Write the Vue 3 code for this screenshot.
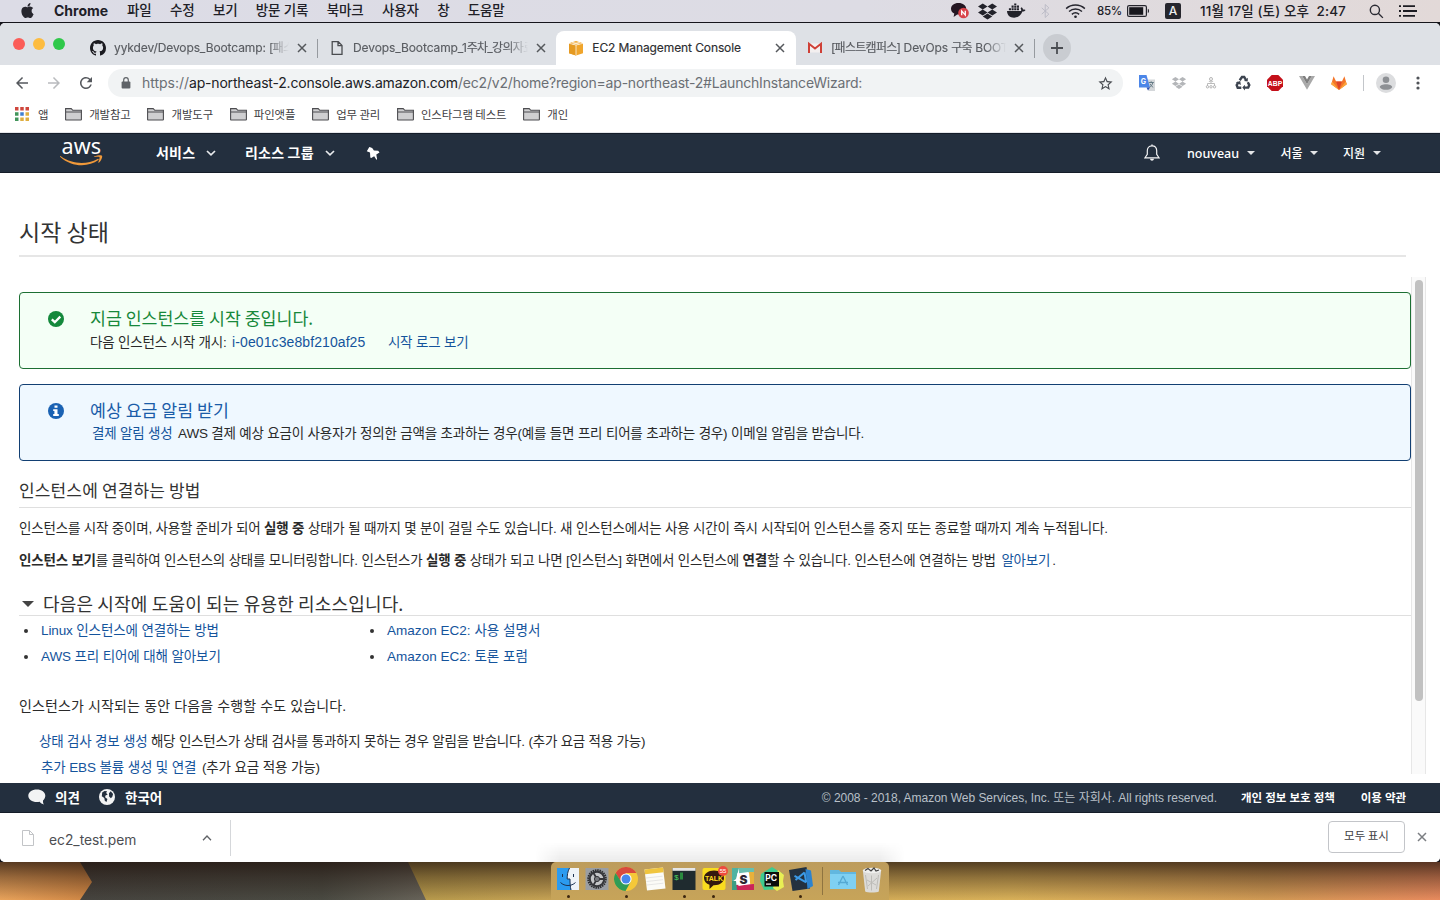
<script setup>
const menus = ['파일', '수정', '보기', '방문 기록', '북마크', '사용자', '창', '도움말']
const bookmarks = ['개발참고', '개발도구', '파인앳플', '업무 관리', '인스타그램 테스트', '개인']
</script>

<template>
  <div class="screen">
    <header class="menubar">
      <svg class="apple" viewBox="0 0 24 24"><path d="M12.152 6.896c-.948 0-2.415-1.078-3.96-1.04-2.04.027-3.91 1.183-4.961 3.014-2.117 3.675-.546 9.103 1.519 12.09 1.013 1.454 2.208 3.09 3.792 3.039 1.52-.065 2.09-.987 3.935-.987 1.831 0 2.35.987 3.96.948 1.637-.026 2.676-1.48 3.676-2.948 1.156-1.688 1.636-3.325 1.662-3.415-.039-.013-3.182-1.221-3.22-4.857-.026-3.04 2.48-4.494 2.597-4.559-1.429-2.09-3.623-2.324-4.39-2.376-2-.156-3.675 1.09-4.61 1.09zM15.53 3.83c.843-1.012 1.4-2.427 1.245-3.83-1.207.052-2.662.805-3.532 1.818-.78.896-1.454 2.338-1.273 3.714 1.338.104 2.715-.688 3.559-1.701" /></svg>
      <b class="app-name">Chrome</b>
      <span v-for="m in menus" :key="m" class="menu">{{ m }}</span>
      <div class="status">
        <svg class="s-chat" viewBox="0 0 20 18"><path d="M8.500 1C4 1 1 3.600 1 6.800c0 2.200 1.300 3.900 3.300 4.800L3.600 15l3.600-2.600c5.800.4 9-2.500 9-5.700C16.200 3.500 13 1 8.500 1z" fill="#241722" /><circle cx="13.500" cy="11" r="5.300" fill="#d8434a" /><path d="M11.700 13.200V8.900l3.600 4.200V8.800" fill="none" stroke="#fff" stroke-width="1.300" /></svg>
        <svg class="s-drop" viewBox="0 0 24 24"><path d="M6 1.807L0 5.629l6 3.822 6.001-3.822L6 1.807zM18 1.807l-6 3.822 6 3.822 6-3.822-6-3.822zM0 13.274l6 3.822 6.001-3.822L6 9.452l-6 3.822zM18 9.452l-6 3.822 6 3.822 6-3.822-6-3.822zM6 18.371l6.001 3.822 6-3.822-6-3.822L6 18.371z" /></svg>
        <svg class="s-dock" viewBox="0 0 20 16"><path d="M0 8h14.800c.3-1 .2-2-.5-3l1-.9c1 .7 1.400 1.500 1.500 2.300 1 0 2 0 2.700.5-.6 1.300-1.800 1.700-3.300 1.700C14.600 13 11.500 15 7.500 15 3 15 .2 12.500 0 8zM2 5h2.200v2.300H2zM4.800 5H7v2.300H4.800zM7.600 5h2.200v2.300H7.600zM10.400 5h2.200v2.300h-2.200zM4.800 2.300H7v2.200H4.800zM7.600 2.300h2.200v2.200H7.600zM10.400 2.300h2.200v2.200h-2.200zM7.600 0h2.200v1.800H7.600z" /></svg>
        <svg class="s-bt" viewBox="0 0 10 16"><path d="M.8 4.500l7.900 7-4 3.700V.8l4 3.700-7.900 7" /></svg>
        <svg class="s-wifi" viewBox="0 0 22 16"><path d="M1.200 5.500c5.500-5 14.100-5 19.600 0M4.200 8.600c3.900-3.500 9.700-3.500 13.600 0M7.200 11.500c2.200-1.900 5.400-1.900 7.600 0" /><circle cx="11" cy="14" r="1.400" /></svg>
        <span class="pct">85%</span>
        <svg class="s-bat" viewBox="0 0 23 12"><rect x=".6" y=".6" width="18.800" height="10.800" rx="1.500" fill="none" stroke="#25252d" stroke-width="1.200" /><rect x="2.200" y="2.200" width="14" height="7.600" fill="#17171d" /><path d="M20.800 3.800c1.600.4 1.600 4 0 4.400z" /></svg>
        <span class="s-a">A</span>
        <span class="clock">11월 17일 (토) 오후&nbsp; 2:47</span>
        <svg class="s-find" viewBox="0 0 16 16"><circle cx="6.300" cy="6.300" r="4.900" /><path d="M9.900 9.900l4.900 4.900" /></svg>
        <svg class="s-list" viewBox="0 0 18 12"><path d="M0 1.200h2M4 1.200h12M0 6h2M4 6h14M0 10.800h2M4 10.800h12" /></svg>
      </div>
    </header>

    <div class="window">
      <div class="tabs">
        <div class="lights"><i class="red"></i><i class="yellow"></i><i class="green"></i></div>
        <div class="tab">
          <svg class="fav" viewBox="0 0 16 16"><path fill="#1b1b20" d="M8 0C3.580 0 0 3.580 0 8c0 3.540 2.290 6.530 5.470 7.590.4.070.55-.17.55-.38 0-.19-.01-.82-.01-1.490-2.010.37-2.530-.49-2.690-.94-.09-.23-.48-.94-.82-1.130-.28-.15-.68-.52-.01-.53.63-.01 1.080.58 1.230.82.72 1.210 1.870.87 2.330.66.070-.52.28-.87.51-1.070-1.780-.2-3.640-.89-3.640-3.950 0-.87.31-1.590.82-2.150-.08-.2-.36-1.020.08-2.120 0 0 .67-.21 2.200.82.64-.18 1.320-.27 2-.27s1.360.09 2 .27c1.530-1.040 2.200-.82 2.200-.82.44 1.100.16 1.920.08 2.120.51.56.82 1.270.82 2.150 0 3.070-1.870 3.750-3.650 3.950.29.25.54.73.54 1.480 0 1.070-.01 1.930-.01 2.200 0 .21.15.46.55.38A8.010 8.010 0 0 0 16 8c0-4.420-3.580-8-8-8z" /></svg>
          <span class="label fade">yykdev/Devops_Bootcamp: <span class="kr">[패스트</span></span>
          <svg class="x" viewBox="0 0 10 10"><path d="M1 1l8 8M9 1l-8 8" /></svg>
        </div>
        <div class="tab divided">
          <svg class="fav" viewBox="0 0 16 16"><path d="M3.200 1.700h6.100l3.700 3.700v8.900H3.200zM9 1.700v4h4" fill="none" stroke="#4a4c50" stroke-width="1.300" /></svg>
          <span class="label fade">Devops_Bootcamp_1<span class="kr">주차_강의자료</span></span>
          <svg class="x" viewBox="0 0 10 10"><path d="M1 1l8 8M9 1l-8 8" /></svg>
        </div>
        <div class="tab active">
          <svg class="fav" viewBox="0 0 16 16"><path d="M1 3.200L8 1l7 2.200v10L8 15.500l-7-2.300z" fill="#f0a52c" /><path d="M1 3.200L8 5v10.500l-7-2.300z" fill="#e59a22" /><path d="M1 3.300L8 5l7-1.700M8 5v10.200M4 2.200l7.500 2M12 2.200L4.500 4.200" fill="none" stroke="#fff" stroke-width=".7" /></svg>
          <span class="label">EC2 Management Console</span>
          <svg class="x" viewBox="0 0 10 10"><path d="M1 1l8 8M9 1l-8 8" /></svg>
        </div>
        <div class="tab last">
          <svg class="fav" viewBox="0 0 16 16"><path d="M2 3.500h12v9H2z" fill="#f3efef" /><path d="M2 13V3.800l6 4.700 6-4.700V13" fill="none" stroke="#cf4037" stroke-width="2" /></svg>
          <span class="label fade"><span class="kr">[패스트캠퍼스]</span> DevOps <span class="kr">구축</span> BOOTCAMP</span>
          <svg class="x" viewBox="0 0 10 10"><path d="M1 1l8 8M9 1l-8 8" /></svg>
        </div>
        <span class="divider"></span>
        <div class="plus"><svg viewBox="0 0 12 12"><path d="M6 0v12M0 6h12" /></svg></div>
      </div>

      <div class="toolbar">
        <svg class="t" viewBox="0 0 24 24"><path d="M20 11H7.830l5.590-5.590L12 4l-8 8 8 8 1.410-1.410L7.830 13H20v-2z" /></svg>
        <svg class="t dim" viewBox="0 0 24 24"><path d="M12 4l-1.410 1.410L16.170 11H4v2h12.170l-5.580 5.590L12 20l8-8z" /></svg>
        <svg class="t" viewBox="0 0 24 24"><path d="M17.650 6.350A7.958 7.958 0 0012 4c-4.420 0-7.990 3.580-7.990 8s3.570 8 7.990 8c3.730 0 6.840-2.550 7.730-6h-2.080A5.990 5.990 0 0112 18c-3.310 0-6-2.690-6-6s2.690-6 6-6c1.660 0 3.140.69 4.220 1.780L13 11h7V4l-2.350 2.350z" /></svg>
        <div class="omni">
          <svg class="lock" viewBox="0 0 10 12"><path d="M1.500 4.500h7c.5 0 .9.4.9.9v5.200c0 .5-.4.900-.9.900h-7c-.5 0-.9-.4-.9-.9V5.400c0-.5.4-.9.9-.9z" /><path d="M2.700 5V3a2.300 2.300 0 0 1 4.600 0v2" fill="none" stroke="#5f6368" stroke-width="1.200" /></svg>
          <span class="url"><span class="scheme">https://</span><span class="host">ap-northeast-2.console.aws.amazon.com</span><span class="path">/ec2/v2/home?region=ap-northeast-2#LaunchInstanceWizard:</span></span>
          <svg class="star" viewBox="0 0 24 24"><path d="M22 9.240l-7.190-.62L12 2 9.190 8.630 2 9.240l5.460 4.730L5.820 21 12 17.270 18.180 21l-1.630-7.030L22 9.240zM12 15.400l-3.760 2.270 1-4.280-3.320-2.880 4.380-.38L12 6.100l1.710 4.040 4.380.38-3.320 2.880 1 4.280L12 15.400z" /></svg>
        </div>
        <div class="exts">
          <svg viewBox="0 0 16 16"><path d="M6.500 4.500H16V16H9.500z" fill="#d4d7da" /><path d="M0 0h7.500L11 12.500H0z" fill="#4c86e8" /><path d="M7.500 12.500H11L9 15.500z" fill="#2a4fb8" /><text x="1.700" y="8.600" class="g-letter">G</text><path d="M9.800 7.500h5M12.200 6.300v1.200M13.800 7.500c-.4 2.400-1.700 3.800-3.200 4.900M11 8.800c.6 1.600 1.800 2.800 3.200 3.500" fill="none" stroke="#5c7480" stroke-width=".9" /></svg>
          <svg class="gray" viewBox="-1.500 -1.500 27 27"><path d="M6 1.807L0 5.629l6 3.822 6.001-3.822L6 1.807zM18 1.807l-6 3.822 6 3.822 6-3.822-6-3.822zM0 13.274l6 3.822 6.001-3.822L6 9.452l-6 3.822zM18 9.452l-6 3.822 6 3.822 6-3.822-6-3.822zM6 18.371l6.001 3.822 6-3.822-6-3.822L6 18.371z" /></svg>
          <svg viewBox="0 0 16 16"><path d="M8 6v2.500M4.500 11V8.500h7V11M6 7c0-1.500 4-1.500 4 0" fill="none" stroke="#bbb" /><g fill="none" stroke="#b5b5b5"><circle cx="8" cy="4" r="1.500" /><circle cx="4.500" cy="11.800" r="1.200" /><circle cx="8" cy="11.800" r="1.200" /><circle cx="11.500" cy="11.800" r="1.200" /></g></svg>
          <svg viewBox="0 0 16 16"><g fill="none" stroke="#3d4450" stroke-width="2.400"><path d="M4.700 5.200L7 2h2.200l1.700 2.900M12.800 7.200l1.500 2.900-1.100 2.500H9.300M6.300 12.700H2.700L1.700 10.200l1.700-3" /></g><path d="M9 6l3.700.4L12.900 2.700zM9.900 9.700L7.300 12.600l2.700 2.800zM.8 7.600l4.400-1.700L5.900 10z" fill="#3d4450" /></svg>
          <svg viewBox="0 0 16 16"><path d="M4.700 0h6.600L16 4.700v6.600L11.300 16H4.700L0 11.300V4.700z" fill="#c4101a" /><text x="8" y="10.600" class="abp">ABP</text></svg>
          <svg viewBox="0 0 16 16"><path d="M0 1h3.200L8 9.300 12.800 1H16L8 14.800z" fill="#a9a9a9" /><path d="M3.200 1H6l2 3.500L10 1h2.800L8 9.300z" fill="#7f7f7f" /></svg>
          <svg viewBox="0 0 16 16"><path d="M8 15L.2 9.200 2.600 1.200l2.500 5.300h5.800l2.500-5.300 2.400 8z" fill="#f4762a" /><path d="M8 15L5.100 6.500h5.800z" fill="#dd4429" /><path d="M8 15L.2 9.200l1-2.700z M8 15l7.800-5.800-1-2.700z" fill="#fba63b" /></svg>
        </div>
        <span class="tsep"></span>
        <svg class="avatar" viewBox="0 0 20 20"><circle cx="10" cy="10" r="10" fill="#dcdddf" /><circle cx="10" cy="6.700" r="3.300" fill="#8d9094" /><path d="M3.800 14.200c0-4 12.400-4 12.400 0-1.600 3.400-10.800 3.400-12.400 0z" fill="#8d9094" /></svg>
        <svg class="kebab" viewBox="0 0 4 14"><circle cx="2" cy="2" r="1.600" /><circle cx="2" cy="7" r="1.600" /><circle cx="2" cy="12" r="1.600" /></svg>
      </div>

      <div class="bookmarks">
        <svg class="apps" viewBox="0 0 14 14"><path fill="#cf463d" d="M0 0h3.500v3.500H0zM5.250 0h3.500v3.500h-3.500zM10.500 0H14v3.500h-3.500z" /><path fill="#42955b" d="M0 5.250h3.500v3.500H0zM0 10.500h3.500V14H0z" /><path fill="#3f7fd2" d="M5.250 5.250h3.500v3.500h-3.500z" /><path fill="#dfae3f" d="M10.500 5.250H14v3.500h-3.500zM10.500 10.500H14V14h-3.500zM5.250 10.500h3.500V14h-3.500z" /></svg>
        <span class="apps-label">앱</span>
        <div v-for="b in bookmarks" :key="b" class="bm">
          <svg viewBox="0 0 17 14"><path d="M.6 12.400V1.600h5.600l1.600 1.700h8.600v9.100c0 .4-.2.600-.6.600H1.200c-.4 0-.6-.2-.6-.6z" fill="#cfcfd1" stroke="#4c4c50" stroke-width="1.100" /><path d="M1 5h15.200" stroke="#4c4c50" stroke-width="1" /></svg>
          <span>{{ b }}</span>
        </div>
      </div>

      <nav class="aws-nav">
        <svg class="logo" viewBox="0 0 44 28"><text x="1.500" y="14.500" textLength="39.500" lengthAdjust="spacingAndGlyphs">aws</text><path d="M.8 17.200c12 8.600 26.500 8.300 36.800 2.700.9-.4 1.500.6.8 1.200C28.500 28.600 11.500 28.300.3 18c-.5-.5-.1-1.100.5-.8z" fill="#f0993a" /><path d="M34.200 17.500c3.500-1.700 7.500-1.600 7.900-.8.4.9-.6 4.800-3 6.800-.6.4-1 .2-.7-.5.700-1.700 1.500-4.300 1.100-4.900-.5-.6-3.300-.2-4.900 0-.6 0-.8-.300-.4-.6z" fill="#f0993a" /></svg>
        <b class="services">서비스</b>
        <svg class="chev" viewBox="0 0 10 6"><path d="M1 1l4 3.800L9 1" /></svg>
        <b class="groups">리소스 그룹</b>
        <svg class="chev" viewBox="0 0 10 6"><path d="M1 1l4 3.800L9 1" /></svg>
        <svg class="pin" viewBox="0 0 14 14"><path d="M.8 5.200L3.300.9l1.700.5 1.400.9 1.500 2.200L12.200 4.700l1.300 1.800-3.200 2.100.8 4.700-.7.400L8.200 10.300l-3 1.800-.9-.5-.3-5z" /></svg>
        <div class="nav-right">
          <svg class="bell" viewBox="0 0 16 18"><path d="M8 1.800c-3.200 0-4.700 2.300-4.700 5v3.400L1 13.800h14l-2.300-3.600V6.800c0-2.700-1.500-5-4.700-5z" fill="none" stroke="#f3f4f5" stroke-width="1.200" /><path d="M6 14.800h4c-.2 2.600-3.800 2.600-4 0zM7.300.4h1.400v1.400H7.300z" /></svg>
          <span class="user">nouveau</span><i class="caret"></i>
          <span class="kr-nav seoul">서울</span><i class="caret"></i>
          <span class="kr-nav help">지원</span><i class="caret"></i>
        </div>
      </nav>

      <main class="page">
        <h1>시작 상태</h1>
        <div class="scroller">
          <div class="content">
            <section class="alert ok">
              <svg viewBox="0 0 16 16"><circle cx="8" cy="8" r="8" fill="#14893c" /><path d="M3.800 8.300l3 2.900 5.500-5.600" fill="none" stroke="#fff" stroke-width="2.300" /></svg>
              <div>
                <h2>지금 인스턴스를 시작 중입니다.</h2>
                <p>다음 인스턴스 시작 개시: <a class="iid">i-0e01c3e8bf210af25</a><a class="log">시작 로그 보기</a></p>
              </div>
            </section>
            <section class="alert info">
              <svg viewBox="0 0 16 16"><circle cx="8" cy="8" r="8" fill="#1a62b3" /><path d="M6.500 2.500h3v2.300h-3zM5.200 6.200h4.300v4.900h1.300v1.900H5.200v-1.900h1.200V8H5.200z" fill="#fff" /></svg>
              <div>
                <h2>예상 요금 알림 받기</h2>
                <p><a class="pad">결제 알림 생성</a> AWS 결제 예상 요금이 사용자가 정의한 금액을 초과하는 경우(예를 들면 프리 티어를 초과하는 경우) 이메일 알림을 받습니다.</p>
              </div>
            </section>
            <h3>인스턴스에 연결하는 방법</h3>
            <p class="para">인스턴스를 시작 중이며, 사용할 준비가 되어 <b>실행 중</b> 상태가 될 때까지 몇 분이 걸릴 수도 있습니다. 새 인스턴스에서는 사용 시간이 즉시 시작되어 인스턴스를 중지 또는 종료할 때까지 계속 누적됩니다.</p>
            <p class="para monitor"><b>인스턴스 보기</b>를 클릭하여 인스턴스의 상태를 모니터링합니다. 인스턴스가 <b>실행 중</b> 상태가 되고 나면 [인스턴스] 화면에서 인스턴스에 <b>연결</b>할 수 있습니다. 인스턴스에 연결하는 방법 <a class="pad">알아보기</a>.</p>
            <h4><i></i><span>다음은 시작에 도움이 되는 유용한 리소스입니다.</span></h4>
            <div class="links">
              <a>Linux 인스턴스에 연결하는 방법</a><a class="wide">Amazon EC2: 사용 설명서</a>
              <a>AWS 프리 티어에 대해 알아보기</a><a class="wide">Amazon EC2: 토론 포럼</a>
            </div>
            <p class="also">인스턴스가 시작되는 동안 다음을 수행할 수도 있습니다.</p>
            <p class="todo"><a>상태 검사 경보 생성</a> 해당 인스턴스가 상태 검사를 통과하지 못하는 경우 알림을 받습니다. (추가 요금 적용 가능)</p>
            <p class="todo ebs"><a class="pad">추가 EBS 볼륨 생성 및 연결</a> (추가 요금 적용 가능)</p>
          </div>
          <div class="bar"><i></i></div>
        </div>
      </main>

      <footer class="aws-foot">
        <svg class="bubble" viewBox="0 0 18 16"><path d="M8.800.4C4 .4.300 3 .3 6.800c0 3.700 3.700 6.300 8.500 6.300 1 0 2-.1 2.900-.4.9 1.200 2.400 2.500 4.300 2.700-.8-1-1.200-2.500-1-4 1.500-1.200 2.300-2.800 2.300-4.600C17.300 3 13.600.4 8.800.4z" /></svg>
        <b class="opinion">의견</b>
        <svg class="globe" viewBox="0 0 16 16"><circle cx="8" cy="8" r="8" fill="#f2f3f4" /><path d="M3.200 3.500l2.300-1.600 2.600.3-1 1.700 1.600 1.600-2.200 1.100-.4 1.700 2.300 1.700-.9 3.100-1.700-1.400-.5-2.600-2.500-1.900zM10 4.300l1.700-2 2.400 2.800-.8 2.700-1.400 1.500-1.800-1.700z" fill="#232f3e" /></svg>
        <b>한국어</b>
        <span class="copy">© 2008 - 2018, Amazon Web Services, Inc. 또는 자회사. All rights reserved.</span>
        <b class="legal privacy">개인 정보 보호 정책</b>
        <b class="legal">이용 약관</b>
      </footer>

      <div class="downloads">
        <svg class="file" viewBox="0 0 12 16"><path d="M.5.500h7l4 4v11H.5zM7.500.5v4h4" /></svg>
        <span class="fname">ec2_test.pem</span>
        <svg class="up" viewBox="0 0 10 6"><path d="M1 5.200L5 1l4 4.200" /></svg>
        <span class="dsep"></span>
        <button class="all">모두 표시</button>
        <svg class="x dx" viewBox="0 0 10 10"><path d="M1 1l8 8M9 1l-8 8" /></svg>
      </div>
    </div>

    <div class="desktop">
      <svg class="wall" viewBox="0 0 1440 38" preserveAspectRatio="none">
        <defs>
          <linearGradient id="w1" x1="0" x2="1"><stop offset="0" stop-color="#e9a35b" /><stop offset=".065" stop-color="#cf8644" /><stop offset=".29" stop-color="#b79a4c" /><stop offset=".4" stop-color="#c9a456" /><stop offset=".7" stop-color="#d9b159" /><stop offset=".88" stop-color="#d19a55" /><stop offset="1" stop-color="#e98b5e" /></linearGradient>
          <linearGradient id="w2" x1="0" x2="1"><stop offset="0" stop-color="#46443f" /><stop offset=".7" stop-color="#4a4a42" /><stop offset="1" stop-color="#68645a" /></linearGradient>
          <linearGradient id="w3" x1="0" x2="0" y1="0" y2="1"><stop offset="0" stop-color="#20120c" stop-opacity=".72" /><stop offset=".4" stop-color="#20120c" stop-opacity=".4" /><stop offset="1" stop-color="#20120c" stop-opacity="0" /></linearGradient>
        </defs>
        <path d="M0 0h1440v38H0z" fill="url(#w1)" />
        <path d="M80 0h328l18 38H80l12-18z" fill="url(#w2)" />
        <path d="M0 0h1440v38H0z" fill="url(#w3)" />
      </svg>
      <div class="dock">
        <div class="slot run"><svg viewBox="0 0 24 24"><path d="M1 1h22v22H1z" fill="#eef3f8" /><path d="M1 1h12.500c-2 4-2.300 7-2.300 11H14c0 4 .2 8 1 11H1z" fill="#2b9bf0" /><path d="M6.500 7v3M17.500 7v3M4.500 15.500c4 4 11 4 15 0M13.500 1c-2 4-2.300 7-2.300 11H14c0 4 .2 8 1 11" fill="none" stroke="#1c3252" stroke-width="1" /></svg></div>
        <div class="slot"><svg viewBox="0 0 24 24"><path d="M.500 1h23v22H.5z" fill="#9a9ea3" /><circle cx="12" cy="12" r="8.800" fill="none" stroke="#2c2d30" stroke-width="2" stroke-dasharray="1.500 .8" /><circle cx="12" cy="12" r="7.200" fill="#c4c6c8" stroke="#35363a" stroke-width="2" /><path d="M12 12h7M12 12L8.500 6M12 12l-3.500 6" stroke="#35363a" stroke-width="1.800" /><circle cx="12" cy="12" r="2.600" fill="#77797d" stroke="#35363a" /></svg></div>
        <div class="slot run"><svg viewBox="0 0 24 24"><circle cx="12" cy="12" r="12" fill="#f5c839" /><path d="M1.600 6A12 12 0 0 1 22.400 6H12L7 15z" fill="#d94a3d" /><path d="M1.600 6A12 12 0 0 0 11.500 24l5.300-9.500L7 14.500z" fill="#2f9c56" /><circle cx="12" cy="12" r="5.600" fill="#fff" /><circle cx="12" cy="12" r="4.500" fill="#4787ec" /></svg></div>
        <div class="slot"><svg viewBox="0 0 24 24"><path d="M1.500 2.500L20 .500l2.500 21L4 23.500z" fill="#fbfbf7" /><path d="M1.500 2.500L20 .500l.6 4.800L2.100 7.300z" fill="#f0c53e" /><path d="M3 11l16.500-1.800M3.400 14.500L20 12.700M3.800 18l16.600-1.800" stroke="#ddd" stroke-width=".7" /></svg></div>
        <div class="slot run"><svg viewBox="0 0 24 24"><path d="M.500 1h23v22H.5z" fill="#1f2b2f" /><path d="M.5 1h23v2.800H.5z" fill="#e6e6e6" /><text x="2" y="12.500" class="prompt">$</text><path d="M8 5.500h3v7H8z" fill="#2a8a3e" /></svg></div>
        <div class="slot run"><svg viewBox="0 0 24 24"><rect x=".5" y="1" width="23" height="22" rx="2" fill="#f9dc1f" /><path d="M12 3.500c-5.800 0-10 3.400-10 7.500 0 3.200 2.200 5.600 5.500 6.700L7.500 22l4-3.800c6.500.2 10.500-3.100 10.500-7.200 0-4.100-4.200-7.500-10-7.500z" fill="#33190f" /><text x="12" y="14" class="talk">TALK</text></svg><span class="badge">55</span></div>
        <div class="slot"><svg viewBox="0 0 24 24"><path d="M1 1h22v22H1z" fill="#fff" /><path d="M1 1h7L5 12 1 15z" fill="#4fb3a1" /><path d="M8 1h15v4L8 7z" fill="#68bfae" /><path d="M18 5h5v13l-4-1z" fill="#e8b13a" /><path d="M4 18l19-1v6H2z" fill="#cb2459" /><path d="M1 14l4 0 1 9H1z" fill="#3b9d83" /><path d="M6 6.500l11.500-1.500 1.700 12L7.500 19z" fill="#fff" /><text x="12.500" y="17" class="slack">S</text></svg></div>
        <div class="slot"><svg viewBox="0 0 24 24"><path d="M1 7L12 0l11 7-4 15-15 1-4-9z" fill="#3fcb8f" /><path d="M18 3l6 5-1 6 1 6-7 4-4-3z" fill="#e9ef54" /><path d="M4.500 5h14.500v14.500H4.500z" fill="#0c0c0c" /><text x="5.300" y="13.500" class="pc">PC</text><path d="M6 16.500h5v1.200H6z" fill="#fff" /></svg></div>
        <div class="slot run"><svg viewBox="0 0 24 24"><path d="M0 3l17.500-3 3.500 21.500L3.500 24z" fill="#23313f" /><path d="M16.500 2l5.500 1.500L24 19l-5.500 3z" fill="#2c83cf" /><path d="M15.500 5.500L6.500 13M5.500 8.800l11.700 6.500M15.500 5.500l1.700 9.800" fill="none" stroke="#3b9ae6" stroke-width="2" /></svg></div>
        <span class="ksep"></span>
        <div class="slot folder"><svg viewBox="0 0 26 24"><path d="M0 3h9l2 2h15v17H0z" fill="#62b7df" /><path d="M0 7h26v15H0z" fill="#7fd0f2" /><path d="M13 9l-4.500 9M13 9l4.500 9M8 15.500h10" fill="none" stroke="#55a9d3" stroke-width="1.300" /></svg></div>
        <div class="slot trash"><svg viewBox="0 0 20 26"><path d="M.8 3h18.400l-2.400 21.500c-2 1.300-11.600 1.300-13.600 0z" fill="#dcdbd8" /><path d="M3.500 8l2 14M9.500 8.500v15M16.500 8l-2 14M5 13l9 5M15 11l-9 8" stroke="#bdbcb8" stroke-width="1" /><ellipse cx="10" cy="3.500" rx="9.200" ry="2.800" fill="#efefed" /><path d="M3 3.500l3-2 3 2.500 3-3 2 3 3-1" fill="none" stroke="#444" stroke-width="1.200" /></svg></div>
      </div>
    </div>
  </div>
</template>

<style>
body { background: #232021; }
</style>

<style scoped>
.screen { width: 1440px; height: 900px; overflow: hidden; display: flex; flex-direction: column; background: #15151b; font-family: "Liberation Sans", "Noto Sans CJK KR", sans-serif; color: #333; white-space: nowrap; }
.screen svg { display: block; flex: none; }
h1, h2, h3, h4, p { margin: 0; font-weight: 400; }

.menubar { height: 22px; box-sizing: border-box; flex: none; display: flex; align-items: center; background: linear-gradient(90deg, #dcdce6, #dddce4 60%, #e2d9d8); color: #202027; margin-bottom: 1px; padding-left: 20px; }
.apple { width: 15px; height: 15px; fill: #26262e; margin-top: -2px; }
.app-name { font: 700 14px/22px Inter, sans-serif; margin: 0 19px 0 19px; width: 54px; }
.menu { font: 500 13.5px/20px Inter, "Noto Sans CJK KR", sans-serif; letter-spacing: -.15px; margin-right: 18.400px; margin-top: -2px; }
.status { margin-left: auto; display: flex; align-items: center; fill: #22222a; padding-right: 23px; }
.s-chat { width: 20px; height: 18px; margin-right: 8px; margin-left: -1px; }
.s-drop { width: 19px; height: 19px; margin-right: 10px; }
.s-dock { width: 19px; height: 16px; margin-right: 15px; }
.s-bt { width: 9px; height: 16px; fill: none; stroke: #b9b9c4; stroke-width: 1; margin-right: 15px; }
.s-wifi { width: 21px; height: 16px; margin-right: 11px; }
.s-wifi path { fill: none; stroke: #26262e; stroke-width: 1.500; }
.pct { font: 500 11.5px/22px Inter, sans-serif; letter-spacing: -.3px; width: 25px; margin-right: 5px; }
.s-bat { width: 23px; height: 12px; margin-right: 15px; }
.s-a { width: 16px; height: 16px; border-radius: 2px; background: #26262d; color: #eee; font: 500 12px/16px Inter, sans-serif; text-align: center; margin-right: 19px; }
.clock { font: 500 13.5px/20px Inter, "Noto Sans CJK KR", sans-serif; letter-spacing: .12px; width: 147px; margin-right: 22px; margin-top: -1px; }
.s-find { width: 15px; height: 15px; margin-right: 15px; fill: none; stroke: #2a2a32; stroke-width: 1.500; }
.s-list { width: 18px; height: 12px; stroke: #1c1c22; stroke-width: 1.800; }

.window { height: 839px; flex: none; border-radius: 5px; overflow: hidden; background: #fff; display: flex; flex-direction: column; }
.tabs { height: 42px; flex: none; background: #dee1e6; display: flex; align-items: flex-end; position: relative; }
.lights { display: flex; gap: 8px; padding: 0 13px 15px 13px; }
.lights i { width: 12px; height: 12px; border-radius: 50%; }
.red { background: #fb5d58; }
.yellow { background: #fdbc40; }
.green { background: #2fc84a; }
.tab { width: 239.300px; height: 34px; box-sizing: border-box; padding: 0 0 0 12px; display: flex; align-items: center; font: 12px/34px Inter, "Noto Sans CJK KR", sans-serif; letter-spacing: -.1px; color: #5a5d62; position: relative; -webkit-text-stroke: .15px #5a5d62; }
.lights + .tab { width: 239px; }
.tab.divided::before { content: ""; position: absolute; left: 0; top: 8px; width: 1px; height: 19px; background: #969a9f; }
.tab .kr { letter-spacing: -.7px; }
.tab.active { background: #fff; border-radius: 8px 8px 0 0; color: #2c2d30; -webkit-text-stroke: .15px #2c2d30; }
.tab.last { width: 238.300px; padding-left: 11.300px; }
.fav { width: 16px; height: 16px; margin-right: 8px; }
.label { width: 175px; overflow: hidden; margin-right: 8px; }
.fade { -webkit-mask-image: linear-gradient(90deg, #000 155px, transparent); mask-image: linear-gradient(90deg, #000 155px, transparent); }
.x { width: 10px; height: 10px; stroke: #55585c; stroke-width: 1.500; fill: none; }
.divider { width: 1px; height: 19px; margin: 0 8px 7px 0; background: #969a9f; }
.plus { width: 28px; height: 28px; border-radius: 50%; background: #c9ccd1; margin-bottom: 3px; display: grid; place-items: center; }
.plus svg { width: 12px; height: 12px; stroke: #4a4d52; stroke-width: 1.800; }

.toolbar { height: 36px; flex: none; display: flex; align-items: center; padding-left: 13px; }
.t { width: 18px; height: 18px; fill: #55585d; margin-right: 14px; }
.t.dim { fill: #b9bbbe; }
.omni { width: 1015px; height: 28px; border-radius: 14px; background: #f1f3f4; display: flex; align-items: center; box-sizing: border-box; padding: 0 9px 0 13px; margin-left: -1px; }
.lock { width: 10px; height: 12px; fill: #5f6368; margin-right: 11px; }
.url { font: 14px/28px Inter, sans-serif; color: #6b6f74; flex: 1; display: flex; }
.scheme { width: 47px; letter-spacing: -.02px; }
.host { color: #202124; letter-spacing: -.19px; width: 269px; }
.path { letter-spacing: -.2px; }
.star { width: 17px; height: 17px; fill: #4b4e53; }
.exts { display: flex; gap: 16px; margin-left: 16px; align-items: center; }
.exts svg { width: 16px; height: 16px; }
.gray { fill: #b4b6b9; }
.g-letter { font: 700 7px Inter, sans-serif; fill: #fff; }
.abp { font: 700 6.800px "Liberation Sans", sans-serif; fill: #fff; text-anchor: middle; }
.tsep { width: 1px; height: 16px; background: #c3c6ca; margin: 0 12px 0 16px; }
.avatar { width: 20px; height: 20px; }
.kebab { width: 4px; height: 14px; fill: #505358; margin-left: 20px; }

.bookmarks { height: 32px; flex: none; display: flex; align-items: center; padding: 0 0 5px 15px; box-sizing: border-box; font: 11.400px/20px "Noto Sans CJK KR", sans-serif; letter-spacing: -.1px; color: #3f4043; border-bottom: 1px solid #e4e6ea; }
.apps { width: 14px; height: 14px; margin-right: 9px; }
.apps-label { margin-right: 16.500px; }
.bm { display: flex; align-items: center; margin-right: 16.500px; }
.bm svg { width: 17px; height: 14px; margin-right: 7.300px; }

.aws-nav { height: 40px; flex: none; box-sizing: border-box; background: #232f3e; border-top: 1px solid #141c28; border-bottom: 1px solid #141c28; display: flex; align-items: center; color: #fff; padding-left: 60px; }
.logo { width: 44px; height: 28px; margin-right: 52px; margin-top: -1px; }
.logo text { font: 400 22px "Noto Sans", sans-serif; fill: #fff; }
.aws-nav b { font: 700 14px/36px "Noto Sans CJK KR", sans-serif; letter-spacing: .2px; margin-top: -2px; }
.services { width: 50px; }
.aws-nav .groups { width: 80px; margin-left: 29px; }
.chev { width: 10px; height: 6px; fill: none; stroke: #e8eaec; stroke-width: 1.700; }
.pin { width: 14px; height: 14px; fill: #fff; margin-left: 31px; }
.nav-right { margin-left: auto; display: flex; align-items: center; padding-right: 59px; }
.bell { width: 16px; height: 18px; fill: #f3f4f5; margin-right: 27px; }
.user { font: 500 12.500px/38px "Noto Sans", sans-serif; width: 60px; padding-top: 1px; }
.kr-nav { font: 500 12px/38px "Noto Sans CJK KR", sans-serif; }
.seoul { width: 29.500px; margin-left: 25.500px; }
.help { width: 30px; margin-left: 25px; }
.caret { width: 0; height: 0; border: 4px solid transparent; border-top-color: #e2e4e6; border-bottom: 0; }

.page { height: 610px; flex: none; padding-left: 19px; box-sizing: border-box; overflow: hidden; }
h1 { font: 23px/40px "Noto Sans CJK KR", sans-serif; width: 1387px; padding: 38px 0 4px; border-bottom: 2px solid #e6e6e6; color: #333; }
.scroller { margin-top: 20px; display: grid; grid-template-columns: 1392px 15px; }
.content { padding-top: 15px; height: 491px; overflow: hidden; }
.bar { height: 497px; box-sizing: border-box; border: solid #e7e7e7; border-width: 0 1px; background: #fafafa; padding: 3px 3px 0; }
.bar i { display: block; width: 8px; margin-left: 0; height: 421px; border-radius: 4px; background: #c1c1c1; }
.alert { height: 77px; box-sizing: border-box; border: 1px solid; border-radius: 4px; margin-bottom: 15px; display: flex; padding: 15px 0 0 28px; }
.alert svg { width: 16px; height: 16px; margin: 3px 26px 0 0; }
.alert h2 { font: 17.300px/20px "Noto Sans CJK KR", sans-serif; }
.ok { background: #f4fff6; border-color: #1c6f33; }
.ok h2 { color: #17883a; }
.info { background: #eff8ff; border-color: #123f73; margin-bottom: 0; }
.info h2 { color: #1a5ca8; }
p, .links { font-size: 13.500px; line-height: 20px; letter-spacing: -.19px; color: #2a2a2a; }
.alert p { line-height: 20px; padding-top: 4px; }
a { color: #14549c; }
.iid { font-size: 14px; letter-spacing: .09px; margin-left: 2px; }
.log { margin-left: 22.500px; }
.pad { padding: 0 2px; }
h3 { font: 17px/20px "Noto Sans CJK KR", sans-serif; letter-spacing: .15px; height: 27px; padding-top: 19px; border-bottom: 1px solid #dfdfdf; }
.para { padding-top: 11px; height: 21px; }
.monitor { height: 23px; letter-spacing: -.205px; }
h4 { font: 18px/20px "Noto Sans CJK KR", sans-serif; letter-spacing: .16px; height: 21px; margin-top: 20px; border-bottom: 1px solid #dfdfdf; display: flex; align-items: center; }
h4 i { border: 6px solid transparent; border-top-color: #444; border-bottom: 0; margin: -2px 9px 0 3px; }
h4 span { margin-top: -4px; }
.links { display: grid; grid-template-columns: 346px 400px; padding-top: 2px; letter-spacing: -.12px; }
.links .wide { letter-spacing: .03px; }
.links a { line-height: 26px; padding-left: 22px; position: relative; }
.links a::before { content: ""; position: absolute; left: 5px; top: 11px; width: 4px; height: 4px; border-radius: 50%; background: #333; }
.also { font-size: 14px; letter-spacing: .13px; margin-top: 26px; margin-bottom: 13px; }
.todo { line-height: 26px; padding-left: 20px; letter-spacing: -.205px; }
.ebs { letter-spacing: -.13px; }

.aws-foot { height: 30px; flex: none; box-sizing: border-box; background: #232f3e; border-bottom: 1px solid #141c28; display: flex; align-items: center; color: #fff; padding: 0 34px 2px 28px; }
.aws-foot b { font-size: 13.500px; }
.bubble { width: 18px; height: 16px; fill: #f2f3f4; margin-right: 9px; }
.opinion { width: 44px; }
.globe { width: 16px; height: 16px; margin-right: 10px; }
.copy { margin-left: auto; font-size: 12px; letter-spacing: -.03px; color: #b9c0c8; margin-right: 24px; }
.aws-foot .legal { font-size: 11.500px; letter-spacing: -.05px; }
.aws-foot .privacy { margin-right: 26px; }

.downloads { height: 49px; flex: none; display: flex; align-items: center; padding-left: 22px; position: relative; background: #fff; }
.downloads::after { content: ""; position: absolute; left: 535px; width: 370px; bottom: 0; height: 20px; background: linear-gradient(rgba(0, 0, 0, 0), rgba(0, 0, 0, .08)); -webkit-mask-image: linear-gradient(90deg, transparent, #000 25px, #000 345px, transparent); mask-image: linear-gradient(90deg, transparent, #000 25px, #000 345px, transparent); }
.file { width: 12px; height: 16px; fill: none; stroke: #c2c4c7; margin-right: 15px; }
.fname { font: 13.800px/20px Inter, sans-serif; color: #4c4e52; width: 153px; padding-top: 5px; }
.up { width: 10px; height: 6px; fill: none; stroke: #606367; stroke-width: 1.300; }
.dsep { width: 1px; height: 36px; background: #d5d7da; margin-left: 17.500px; }
.all { margin: -2px 12px 0 auto; width: 77px; height: 32px; border: 1px solid #c3c5c9; border-radius: 4px; background: #fff; font: 11.500px/20px "Noto Sans CJK KR", sans-serif; color: #3f4145; padding: 0 0 3px; }
.dx { margin: -2px 13px 0 0; stroke: #7b7e82; }

.desktop { height: 38px; flex: none; position: relative; display: flex; justify-content: center; }
.wall { position: absolute; inset: 0; width: 1440px; height: 38px; }
.dock { position: relative; width: 338px; height: 38px; box-sizing: border-box; background: linear-gradient(#bd9c5c, #c7a459); border-radius: 5px 5px 0 0; display: flex; padding: 5px 0 0 2.500px; }
.slot { width: 29.100px; height: 33px; position: relative; display: flex; justify-content: center; }
.slot svg { width: 24px; height: 24px; }
.slot.run::after { content: ""; position: absolute; left: 13px; bottom: 2px; width: 3px; height: 3px; border-radius: 50%; background: #3c260e; }
.badge { position: absolute; right: 0; top: -1px; width: 10px; height: 10px; border-radius: 50%; background: #ee4b3e; color: #fff; font: 6px/10px "Liberation Sans", sans-serif; text-align: center; }
.ksep { width: 1px; height: 28px; background: #8f7440; margin: 0 5.500px 0 6.500px; }
.slot.folder svg { width: 26px; }
.slot.trash svg { width: 20px; height: 26px; }
.prompt { font: 8px "Liberation Mono", monospace; fill: #4fd25e; }
.talk { font: 700 7px "Liberation Sans", sans-serif; fill: #f9dc1f; text-anchor: middle; }
.slack { font: 900 12px Inter, sans-serif; fill: #2c2433; text-anchor: middle; }
.pc { font: 700 8.500px Inter, sans-serif; fill: #fff; }
</style>
